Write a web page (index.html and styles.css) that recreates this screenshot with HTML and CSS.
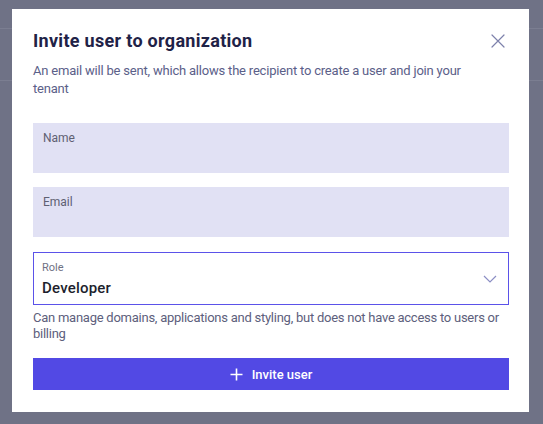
FILE: index.html
```html
<!DOCTYPE html>
<html lang="en">
<head>
<meta charset="utf-8">
<title>Invite user to organization</title>
<link rel="stylesheet" href="styles.css">
</head>
<body>
<div class="backdrop">
  <div class="page-bar page-bar-top"></div>
  <div class="page-bar page-bar-mid"></div>
</div>
<div class="overlay">
  <div class="modal" role="dialog" aria-labelledby="modal-title">
    <div class="modal-header">
      <h2 id="modal-title" class="modal-title">Invite user to organization</h2>
      <button class="close-btn" type="button" aria-label="Close">
        <svg width="14" height="14" viewBox="0 0 14 14" aria-hidden="true">
          <path d="M1 1 L13 13 M13 1 L1 13" stroke="#7d81ab" stroke-width="1.2" fill="none" stroke-linecap="round"/>
        </svg>
      </button>
    </div>
    <p class="modal-subtitle">An email will be sent, which allows the recipient to create a user and join your tenant</p>
    <form class="invite-form">
      <label class="field">
        <span class="field-label">Name</span>
        <input class="field-input" type="text">
      </label>
      <label class="field">
        <span class="field-label">Email</span>
        <input class="field-input" type="email">
      </label>
      <div class="select-field">
        <div class="select-text">
          <span class="select-label">Role</span>
          <span class="select-value">Developer</span>
        </div>
        <svg class="chevron" width="14" height="8" viewBox="0 0 14 8" aria-hidden="true">
          <path d="M1 1 L7 7 L13 1" stroke="#8b8ec4" stroke-width="1.2" fill="none"/>
        </svg>
      </div>
      <p class="helper">Can manage domains, applications and styling, but does not have access to users or billing</p>
      <button class="primary-btn" type="button">
        <svg width="13" height="13" viewBox="0 0 13 13" aria-hidden="true">
          <path d="M6.5 0.5 V12.5 M0.5 6.5 H12.5" stroke="#ffffff" stroke-width="1.6" fill="none"/>
        </svg>
        <span>Invite user</span>
      </button>
    </form>
  </div>
</div>
</body>
</html>
```

FILE: styles.css
```css
* {
  box-sizing: border-box;
}

html, body {
  margin: 0;
  padding: 0;
  height: 100%;
}

body {
  font-family: "Roboto", "Liberation Sans", sans-serif;
  background: #6f7286;
  position: relative;
  overflow: hidden;
}

.backdrop {
  position: absolute;
  inset: 0;
}

.page-bar {
  position: absolute;
  left: 0;
  right: 0;
  height: 1px;
  background: #7b7e91;
}

.page-bar-top {
  top: 28px;
}

.page-bar-mid {
  top: 80px;
}

.overlay {
  position: relative;
  padding: 9px 0 0 12px;
}

.modal {
  width: 517px;
  background: #ffffff;
  padding: 20px 20px 22px 21px;
}

.modal-header {
  display: flex;
  align-items: flex-start;
  justify-content: space-between;
}

.modal-title {
  margin: 0;
  font-size: 18px;
  line-height: 24px;
  font-weight: 700;
  color: #1f2247;
  letter-spacing: 0.3px;
}

.close-btn {
  border: 0;
  background: transparent;
  padding: 0;
  margin: 5px 4px 0 0;
  width: 14px;
  height: 14px;
  display: flex;
  cursor: pointer;
}

.modal-subtitle {
  margin: 9px 0 0;
  font-size: 13px;
  line-height: 18px;
  color: #5b6089;
  letter-spacing: -0.2px;
  padding-right: 20px;
}

.invite-form {
  margin-top: 25px;
  display: flex;
  flex-direction: column;
}

.field {
  display: flex;
  flex-direction: column;
  height: 50px;
  background: #e1e1f4;
  padding: 7px 10px 0;
  margin-bottom: 14px;
}

.field-label {
  font-size: 12px;
  line-height: 16px;
  color: #5e6072;
}

.field-input {
  border: 0;
  background: transparent;
  outline: none;
  padding: 0;
  font: inherit;
  font-size: 14px;
}

.select-field {
  display: flex;
  align-items: center;
  justify-content: space-between;
  height: 53px;
  border: 1px solid #5b52e9;
  padding: 0 11px 0 8px;
  margin-top: 1px;
}

.select-text {
  display: flex;
  flex-direction: column;
  padding-top: 1px;
}

.select-label {
  font-size: 11px;
  line-height: 14px;
  color: #6f7184;
}

.select-value {
  font-size: 15px;
  line-height: 20px;
  font-weight: 500;
  color: #1d1f2d;
  margin-top: 3px;
  letter-spacing: 0.2px;
}

.chevron {
  display: block;
}

.helper {
  margin: 5px 0 0;
  font-size: 13px;
  line-height: 16px;
  color: #5d607c;
  letter-spacing: -0.25px;
}

.primary-btn {
  margin-top: 16px;
  height: 32px;
  border: 0;
  background: #5249e4;
  color: #ffffff;
  display: flex;
  align-items: center;
  justify-content: center;
  gap: 9px;
  font: inherit;
  font-size: 13px;
  font-weight: 500;
  cursor: pointer;
}
```
